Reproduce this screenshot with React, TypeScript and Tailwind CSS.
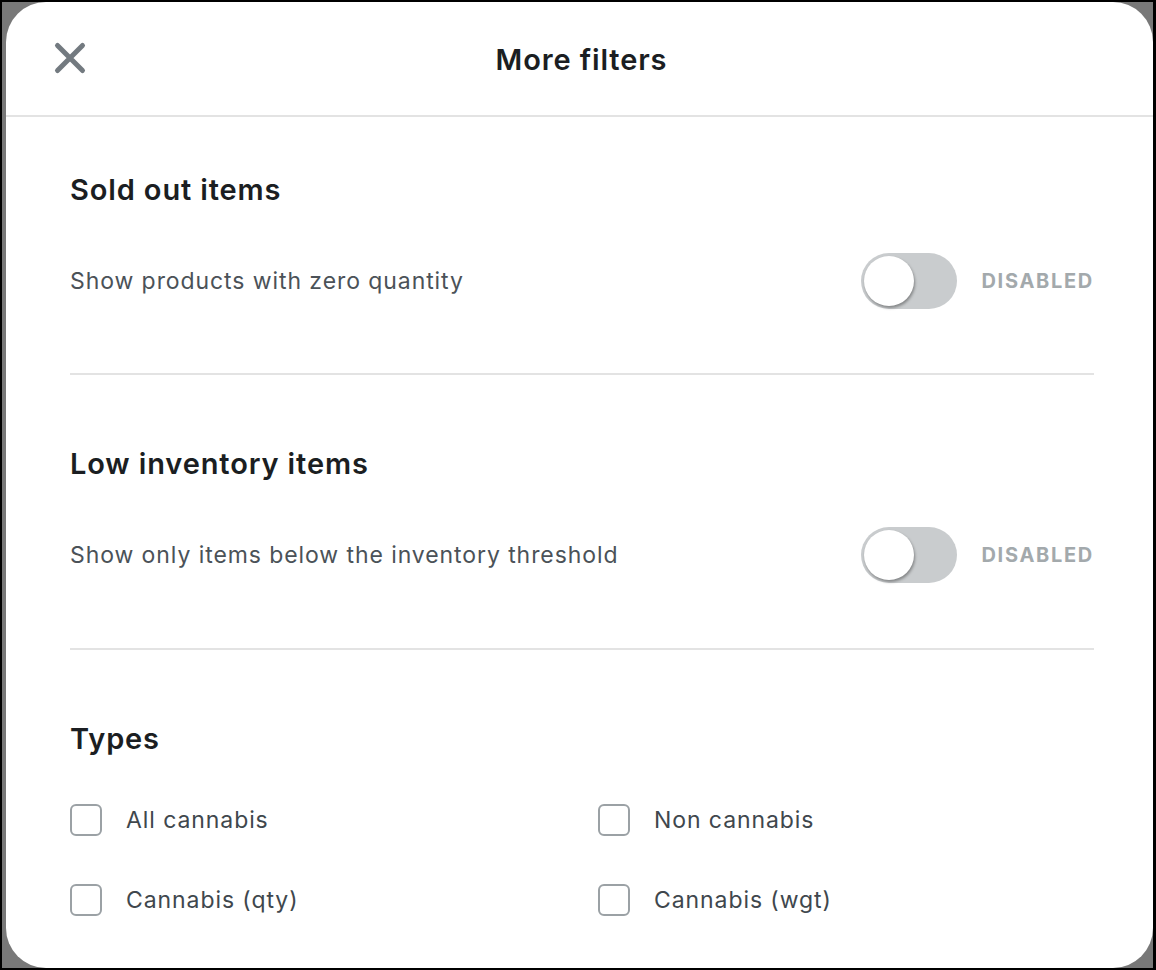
import React from "react";

const FONT = { fontFamily: "Inter, 'Noto Sans', sans-serif" };

function CloseIcon() {
  return (
    <svg width="34" height="34" viewBox="0 0 34 34" fill="none">
      <path
        d="M4.5 4.5 L29.5 29.5 M29.5 4.5 L4.5 29.5"
        stroke="#737a80"
        strokeWidth="5"
        strokeLinecap="round"
      />
    </svg>
  );
}

function Toggle() {
  return (
    <div className="flex items-center">
      <div className="flex h-[56px] w-[96px] items-center rounded-full bg-[#c9ccce] px-[3px]">
        <span className="h-[50px] w-[50px] rounded-full bg-white shadow-[1px_2px_3px_rgba(0,0,0,0.35)]" />
      </div>
      <span className="ml-6 text-[20px] font-bold tracking-[0.085em] text-[#a3a9ac]">
        DISABLED
      </span>
    </div>
  );
}

function ToggleSection({ title, label }: { title: string; label: string }) {
  return (
    <section className="flex flex-col">
      <h2 className="text-[29px] font-semibold leading-[32px] tracking-[0.03em] text-[#1b1e22]">
        {title}
      </h2>
      <div className="mt-[47px] flex items-center justify-between">
        <span className="text-[23px] tracking-[0.04em] text-[#4b5258]">{label}</span>
        <Toggle />
      </div>
    </section>
  );
}

function Check({ label }: { label: string }) {
  return (
    <label className="flex h-[40px] items-center gap-6">
      <span className="h-[32px] w-[32px] rounded-[6px] border-2 border-[#9ba1a5] bg-white" />
      <span className="text-[23px] tracking-[0.04em] text-[#40474d]">{label}</span>
    </label>
  );
}

export default function App() {
  return (
    <div className="h-[970px] w-[1156px] bg-black pb-[2px] pl-[2px] pr-[3px] pt-[2px]" style={FONT}>
      <div className="h-full w-full bg-[#787878] pl-[4px]">
        <div className="flex h-full flex-col overflow-hidden rounded-[40px] bg-white">
          {/* Header */}
          <header className="relative flex h-[115px] shrink-0 items-center justify-center border-b-2 border-[#e3e3e3] pt-[3px]">
            <button className="absolute left-[47px] top-[39px]">
              <CloseIcon />
            </button>
            <h1 className="ml-[4px] text-[29px] font-semibold tracking-[0.03em] text-[#1b1e22]">
              More filters
            </h1>
          </header>

          <div className="flex flex-col pl-16 pr-[59px]">
            <div className="pt-[57px]">
              <ToggleSection title="Sold out items" label="Show products with zero quantity" />
            </div>
            <div className="mt-[64px] h-[2px] bg-[#e3e3e3]" />
            <div className="pt-[73px]">
              <ToggleSection
                title="Low inventory items"
                label="Show only items below the inventory threshold"
              />
            </div>
            <div className="mt-[65px] h-[2px] bg-[#e3e3e3]" />
            <section className="pt-[73px]">
              <h2 className="text-[29px] font-semibold leading-[32px] tracking-[0.03em] text-[#1b1e22]">
                Types
              </h2>
              <div className="mt-[45px] grid grid-cols-[528px_1fr] gap-y-[40px]">
                <Check label="All cannabis" />
                <Check label="Non cannabis" />
                <Check label="Cannabis (qty)" />
                <Check label="Cannabis (wgt)" />
              </div>
            </section>
          </div>
        </div>
      </div>
    </div>
  );
}
